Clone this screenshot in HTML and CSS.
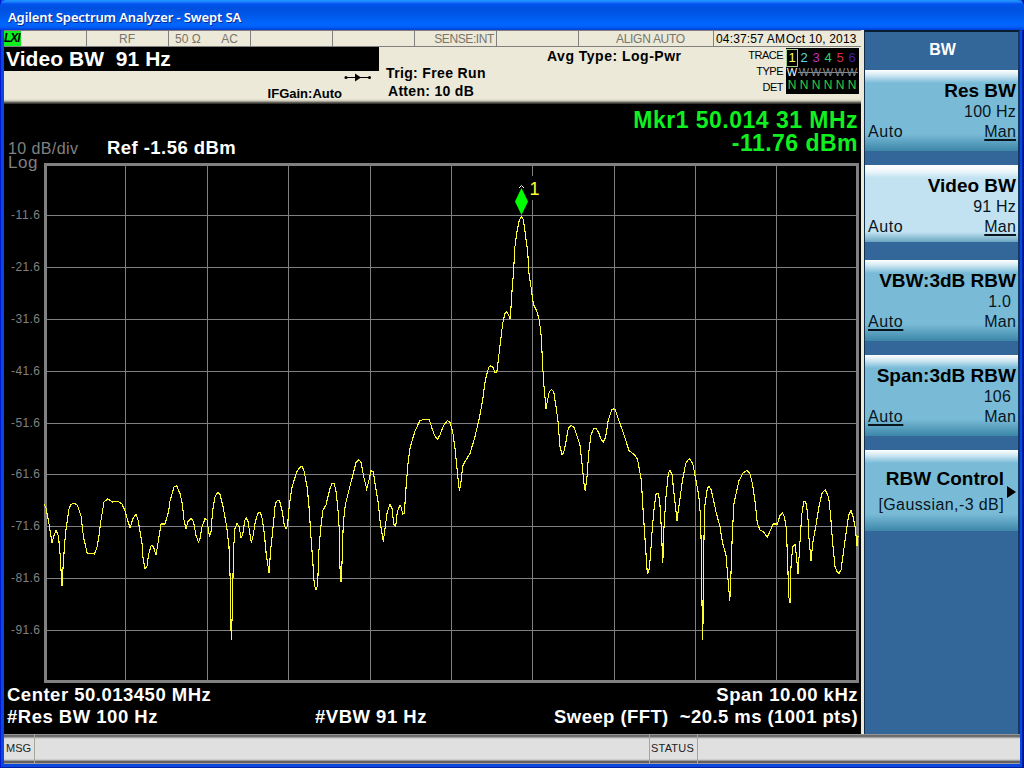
FILE: index.html
```
<!DOCTYPE html>
<html lang="en">
<head>
    <meta charset="UTF-8">
    <meta name="viewport" content="width=device-width, initial-scale=1.0">
    <title>Agilent Spectrum Analyzer - Swept SA</title>
    <link rel="stylesheet" href="styles.css">
</head>

<body>
    <div class="window">
        <div class="title-bar">Agilent Spectrum Analyzer - Swept SA</div>

        <div class="main">
            <div class="analyzer">
                <div class="info-strip">
                    <div class="cell"><span class="lxi">LXI</span></div>
                    <div class="cell center">RF</div>
                    <div class="cell spread"><span>50 Ω</span><span>AC</span></div>
                    <div class="cell"></div>
                    <div class="cell"></div>
                    <div class="cell right">SENSE:INT</div>
                    <div class="cell"></div>
                    <div class="cell align">ALIGN AUTO</div>
                    <div class="cell clock"><span>04:37:57 AM</span><span>Oct 10, 2013</span></div>
                </div>

                <div class="settings">
                    <div class="active-function">
                        <div class="entry">Video BW&nbsp; 91 Hz</div>
                        <div class="gain">
                            <span>IFGain:Auto</span>
                            <svg class="path-icon" width="28" height="9" viewBox="0 0 28 9">
                                <path d="M2 4.5H26" stroke="#000"/>
                                <circle cx="2" cy="4.5" r="1.5"/>
                                <circle cx="25.5" cy="4.5" r="1.5"/>
                                <path d="M11 0.5L17 4.5L11 8.5Z"/>
                            </svg>
                        </div>
                    </div>
                    <div class="trigger">
                        <p class="trig">Trig: Free Run</p>
                        <p class="atten">Atten: 10 dB</p>
                    </div>
                    <div class="average">Avg Type: Log-Pwr</div>
                    <div class="trace-labels">
                        <p>TRACE</p>
                        <p>TYPE</p>
                        <p>DET</p>
                    </div>
                    <div class="trace-box">
                        <span class="t1">1</span><span class="t2">2</span><span class="t3">3</span><span class="t4">4</span><span class="t5">5</span><span class="t6">6</span>
                        <span class="type on">W</span><span class="type">W</span><span class="type">W</span><span class="type">W</span><span class="type">W</span><span class="type">W</span>
                        <span class="det">N</span><span class="det">N</span><span class="det">N</span><span class="det">N</span><span class="det">N</span><span class="det">N</span>
                    </div>
                </div>

                <div class="display">
                    <div class="marker-readout">
                        <p class="freq">Mkr1 50.014 31 MHz</p>
                        <p class="ampl">-11.76 dBm</p>
                    </div>
                    <div class="ref-row">
                        <span class="scale">10 dB/div</span>
                        <span class="ref">Ref -1.56 dBm</span>
                    </div>

                    <svg class="plot" width="857" height="526" viewBox="4 158 857 526">
                        <text class="log" x="8" y="168">Log</text>
                        <g class="ticks">
                            <text x="11" y="219" textLength="29">-11.6</text>
                            <text x="11" y="271" textLength="29">-21.6</text>
                            <text x="11" y="323" textLength="29">-31.6</text>
                            <text x="11" y="375" textLength="29">-41.6</text>
                            <text x="11" y="427" textLength="29">-51.6</text>
                            <text x="11" y="478" textLength="29">-61.6</text>
                            <text x="11" y="530" textLength="29">-71.6</text>
                            <text x="11" y="582" textLength="29">-81.6</text>
                            <text x="11" y="634" textLength="29">-91.6</text>
                        </g>
                        <path class="grid" d="M125.5 164V682M207.5 164V682M288.5 164V682M370.5 164V682M451.5 164V682M532.5 164V176M532.5 200V682M614.5 164V682M695.5 164V682M776.5 164V682
                            M45 215.5H858M45 267.5H858M45 319.5H858M45 371.5H858M45 423.5H858M45 474.5H858M45 526.5H858M45 578.5H858M45 630.5H858"/>
                        <rect class="frame" x="45.5" y="164.5" width="812" height="517"/>
                        <polyline class="trace" points="44,504 46,508 49,524 52,543 53.5,537 56,530.5 58.5,536 60,553 62,586 63.5,560 65.5,533 69,509 71,504.5 74,503 77.5,505.5 81,516 83.5,537 87,552.5 88.5,553.7 94.5,554 97,547 99.5,533 100.5,523 104,502 107.7,498.8 112.5,502 118,501.5 122,504 125,511 130,528 133,518.5 136,514.3 138,520 142,543 143,558 145,569 147,566 148.5,555 151,546 152,545 153.5,547 156,555 158,543 161,524 165,524 168.7,511 170,501 174,487 176.7,486 180,493.5 182.5,505 184,520 186,528.5 188,521.5 191,518.3 193.5,521.5 196,535.5 198.5,542 200,538.5 202,527 205,518.5 207,520 209.5,537 211,531.5 212.7,510 215,497 217.7,492.3 220,494.5 222.7,505 226.7,526.7 229,546.7 230.3,582 231.2,639.5 232.3,613 233.5,550 235,528 237,523.7 239,526.7 241,537.3 242.7,535 244.7,520.7 246.3,518.3 248,521.7 251.3,542.5 253.3,535 255,523.3 257.7,513.3 260,512.3 261.7,516 264.3,533.3 266.3,555 269,572.5 270.7,550 273.3,525 275.3,503.3 277.3,500.5 279.7,501 282.3,511.7 284.3,526 286,528.3 287.5,526 289,508.3 291.7,488.3 296.7,471.7 300,467.2 302.3,466.5 304,470.7 307.3,488.3 309.3,510 310.7,533.3 312.7,560 314.3,585 316,589.5 317.7,585 318.7,553.3 320.7,528.3 323,510 326,505 330,488.3 332,483.5 334.3,483.5 336,491.7 338,510 339.3,530 340,568 341,581.5 342,563 343.3,523 345.3,505 349,490 353.3,473.3 356,462.7 358.7,459.5 361,462.3 363.7,476.7 366.7,489 368.7,481.7 371,470.7 373.3,471.7 375.3,485 378.3,503.3 380.3,523.3 383.3,541.5 385,528.3 387.3,511.7 390,504.7 392,508.3 393.7,524 395.7,526.3 397.3,511.7 400,505 401.3,507.5 402.7,514.3 404.3,513.3 406,488.3 408,463.3 410.3,446.7 415,431 420,420.5 424,419.5 429.3,420 432,428.3 434.7,435.7 437.3,439.5 440,435 443.3,426 447.3,420.7 450,422.3 452.7,431.7 455,448.3 457.3,471.7 459.3,490.5 460.7,485 462.7,466 465,461.7 470,453.3 474.7,437.7 479.3,418.3 482.7,400 485.3,380 488.7,367.3 490.7,365.7 493,367.3 495,373 496.7,372.7 498.3,360 500.7,340 502.7,323.3 505,313.3 506.7,311.7 508.7,315 510.3,319.3 511.7,295 513.7,270 514.7,248.3 516.7,233.3 519.3,220 521.7,216.3 523.3,219.3 525,231.7 527.7,251.7 529,273.3 531.7,291.7 533.3,304 536.7,310.7 539.3,320 541.3,336.7 542.7,366.7 544,386.7 546,408.5 547.3,401.7 549.3,391.7 551.7,389.5 553.7,391.7 556,406.7 558.3,423.3 559.7,445 562,454.5 563.7,452.7 566,441.7 568.3,428.3 571.3,425.5 574,427.3 577.3,436.7 580,445 582.3,466.7 584.3,486.7 585.3,490.5 587,476.7 588.7,453.3 591,435 593.3,429 595.7,428.3 598.3,431.7 600.7,438.3 603.3,442.3 605.7,436.7 608.3,420 611.7,410 613.5,409 615.3,410 618.7,420 623.3,432.7 629,450.5 635,455.3 637.5,459.3 641.3,480 643.3,513.3 645.3,543.3 647.3,573.3 648.7,572.3 650.3,558.3 652.3,528.3 654.3,506.7 656,494.3 658,493.3 659.7,500 661.3,528.3 662.8,562.5 664,526.7 666,496.7 668.3,473.3 670,470.5 672,474 674.3,496.7 677,520.5 679.3,503.3 682.3,481.7 685.7,463.3 689.3,458.5 692.7,463.3 695.3,476.7 698.7,495 700.3,513.3 701.3,546.7 702,603 702.8,639.5 703.8,546.7 704.7,506.7 707.3,488.3 709.3,486.5 711.3,490 716,511.7 720,526.7 722.3,541.7 726,555 728.3,583.3 729.8,600.5 731,573.3 732.3,533.3 734,503.3 739,480.7 743.3,472.7 746.7,470.5 749.7,472.7 752.7,485 755.3,503.3 757.3,523.3 760,530 763.3,531.7 767.3,537.3 770,531 773.3,524 777.3,524 780,515.7 782.3,512.5 784.3,516.7 786.3,528.3 787.7,561.7 788.7,596.7 790,602.7 791,566.7 792.7,546.7 795,544.5 796.3,555 798,573.7 799.7,546.7 801.7,515 803.7,501.7 805.7,501.7 807.7,513.3 809,538.3 811,560.5 812.7,543.3 816,525 819,506.7 822,493.3 825.3,489.7 828.7,497.3 830.7,516.7 832.7,543.3 835,566.7 837,571.3 839,573.5 841,570 843.3,553.3 846,533.3 848.7,515 851,510.5 853,516.7 855.3,528.3 857,545.7 858,536"/>
                        <!-- marker 1 -->
                        <path class="marker" d="M521.5 188L528 201.5L521.5 215L515 201.5Z"/>
                        <path class="marker-tip" d="M519 188L521.5 185.5L524 188"/>
                        <text class="marker-label" x="529.5" y="195">1</text>
                    </svg>

                    <div class="footer-row">
                        <span class="center-freq">Center 50.013450 MHz</span>
                        <span class="span-freq">Span 10.00 kHz</span>
                    </div>
                    <div class="footer-row">
                        <span class="rbw">#Res BW 100 Hz</span>
                        <span class="vbw">#VBW 91 Hz</span>
                        <span class="sweep">Sweep (FFT)&nbsp; ~20.5 ms (1001 pts)</span>
                    </div>
                </div>
            </div>

            <div class="softkeys">
                <div class="menu-title">BW</div>
                <div class="key">
                    <p class="name">Res BW</p>
                    <p class="value">100 Hz</p>
                    <p class="mode"><span>Auto</span><span class="selected">Man</span></p>
                </div>
                <div class="key active">
                    <p class="name">Video BW</p>
                    <p class="value">91 Hz</p>
                    <p class="mode"><span>Auto</span><span class="selected">Man</span></p>
                </div>
                <div class="key">
                    <p class="name">VBW:3dB RBW</p>
                    <p class="value inset">1.0</p>
                    <p class="mode"><span class="selected">Auto</span><span>Man</span></p>
                </div>
                <div class="key">
                    <p class="name">Span:3dB RBW</p>
                    <p class="value inset">106</p>
                    <p class="mode"><span class="selected">Auto</span><span>Man</span></p>
                </div>
                <div class="key submenu">
                    <div>
                        <p class="name">RBW Control</p>
                        <p class="value">[Gaussian,-3 dB]</p>
                    </div>
                    <svg width="9" height="12" viewBox="0 0 9 12"><path d="M0 0L9 6L0 12Z"/></svg>
                </div>
            </div>
        </div>

        <div class="status-bar">
            <div class="msg-label">MSG</div>
            <div class="msg"></div>
            <div class="status-label">STATUS</div>
            <div class="status"></div>
        </div>
    </div>
</body>
</html>
```
FILE: styles.css
```
:root {
    --panel: #ece9d8;
    --frame-blue: #0a47de;
    --grid: #808080;
    --green: #10f020;
    --yellow: #ffff30;
}

* {
    box-sizing: border-box;
    margin: 0;
    padding: 0;
}

body {
    width: 1024px;
    height: 768px;
    overflow: hidden;
    background: #000;
    font-family: "Liberation Sans", Arial, sans-serif;
}

p, span, div {
    white-space: nowrap;
}

.window {
    display: flex;
    flex-direction: column;
    width: 1024px;
    height: 768px;
    padding: 0 4px 4px;
    background: var(--frame-blue);
    box-shadow: inset 1px 0 #0019cf, inset -1px 0 #00138c, inset -2px -1px #001ea0;
}

.title-bar {
    flex: none;
    height: 30px;
    margin: 0 -4px;
    padding: 7px 0 0 8px;
    border-radius: 6px 6px 0 0;
    background: linear-gradient(#0997ff 0, #2a8fff 1px, #0053ee 4px, #0050e0 8px, #0058e8 15px, #0066ff 24px, #0060f8 27px, #003dd7 30px);
    color: #fff;
    font: 600 13px/20px "Noto Sans", sans-serif;
    letter-spacing: -0.12px;
    text-shadow: 1px 1px #0a2a90;
}

.main {
    display: flex;
    height: 704px;
}

.analyzer {
    width: 860px;
    border-right: 3px solid var(--panel);
    background: #000;
}

/* top strip */
.info-strip {
    display: grid;
    grid-template-columns: 83px repeat(6, 82px) 135px 1fr;
    height: 17px;
    border-top: 1px solid var(--grid);
    border-bottom: 1px solid var(--grid);
    background: var(--panel);
    color: #77756c;
    font-size: 12px;
    line-height: 16px;
}

.cell {
    border-right: 1px solid var(--grid);
}

.center {
    padding-right: 1px;
    text-align: center;
}

.right {
    padding-right: 2px;
    text-align: right;
    letter-spacing: -0.4px;
}

.spread {
    display: flex;
    justify-content: space-between;
    padding: 0 12px 0 6px;
}

.align {
    padding-left: 37px;
    letter-spacing: -0.3px;
}

.clock {
    display: flex;
    gap: 1px;
    border: 0;
    padding-left: 2px;
    color: #000;
    letter-spacing: 0.15px;
}

.lxi {
    display: block;
    width: 17px;
    height: 15px;
    background: #10f020;
    color: #000;
    font: italic bold 12px/15px "Liberation Sans", sans-serif;
    letter-spacing: -1px;
}

/* settings header */
.settings {
    display: flex;
    height: 57px;
    background: linear-gradient(var(--panel) 52px, #c8c5b6 54px, #77756c 55px, #22211e 57px);
    font-weight: bold;
}

.active-function {
    width: 375px;
}

.entry {
    height: 24px;
    padding-left: 2px;
    background: #000;
    color: #fff;
    font-size: 21px;
    line-height: 24px;
    letter-spacing: 0.05px;
}

.gain {
    display: flex;
    justify-content: flex-end;
    gap: 2px;
    padding-right: 7px;
    font-size: 13px;
}

.gain span {
    padding-top: 15px;
    line-height: 15px;
}

.path-icon {
    margin-top: 2px;
}

.trigger {
    width: 168px;
    padding: 17px 0 0 7px;
    font-size: 14px;
    line-height: 18px;
    letter-spacing: 0.35px;
}

.atten {
    padding-left: 2px;
    letter-spacing: 0.3px;
}

.average {
    width: 196px;
    font-size: 14px;
    line-height: 19px;
    letter-spacing: 0.5px;
}

.trace-labels {
    width: 41px;
    padding-right: 1px;
    font-size: 11px;
    font-weight: normal;
    line-height: 16px;
    text-align: right;
    letter-spacing: -0.5px;
}

.trace-box {
    display: grid;
    grid-template-columns: repeat(6, 12px);
    grid-template-rows: 18px 11px 15px;
    width: 73px;
    height: 46px;
    margin: 1px 0 0 2px;
    padding: 1px 0;
    background: #000;
    font-size: 13px;
    font-weight: normal;
    line-height: 18px;
    text-align: center;
}

.t1 { outline: 1px solid #9fd08c; outline-offset: -1px; color: #ffff60; }
.t2 { color: #5fd7df; }
.t3 { color: #c030c8; }
.t4 { color: #30d070; }
.t5 { color: #d03050; }
.t6 { color: #4020a8; }

.type {
    background: linear-gradient(#8a8a8a, #8a8a8a) 0 5px / 100% 1px no-repeat;
    color: #8a8a8a;
    font-size: 11px;
    line-height: 11px;
}

.type.on {
    background: none;
    color: #fff;
}

.det {
    color: #30d040;
    font-size: 12px;
    line-height: 14px;
}

/* measurement display */
.display {
    color: #fff;
    font-weight: bold;
}

.marker-readout {
    height: 33px;
    padding: 5px 3px 0 0;
    color: var(--green);
    font-size: 23px;
    line-height: 23px;
    letter-spacing: 0.48px;
    text-align: right;
}

.ref-row {
    display: flex;
    height: 21px;
    padding-left: 4px;
    font-size: 18.5px;
    line-height: 22px;
    letter-spacing: 0.45px;
}

.scale {
    width: 99px;
    padding-top: 1px;
    color: var(--grid);
    font-size: 16px;
    font-weight: normal;
    letter-spacing: 0.4px;
}

.plot {
    display: block;
    overflow: visible;
}

.log {
    fill: var(--grid);
    font-size: 17px;
    font-weight: normal;
    letter-spacing: 0.5px;
}

.ticks {
    fill: var(--grid);
    font-size: 12px;
    font-weight: normal;
}

.grid {
    stroke: var(--grid);
    stroke-width: 1;
}

.frame {
    fill: none;
    stroke: var(--grid);
    stroke-width: 3;
}

.trace {
    fill: none;
    stroke: var(--yellow);
    stroke-width: 1.1;
    shape-rendering: crispEdges;
}

.marker {
    fill: #00ff00;
}

.marker-tip {
    fill: none;
    stroke: #fff;
}

.marker-label {
    fill: var(--yellow);
    font-size: 18px;
    font-weight: normal;
}

.footer-row {
    display: grid;
    grid-template-columns: 1fr auto;
    height: 22px;
    padding: 0 3px;
    font-size: 18.5px;
    line-height: 22px;
    letter-spacing: 0.5px;
}

.footer-row:last-child {
    grid-template-columns: 308px 1fr auto;
}

.sweep {
    letter-spacing: 0.42px;
}

/* softkey menu */
.softkeys {
    flex: 1;
    border-left: 1px solid #102c48;
    border-right: 2px solid #163a5c;
    border-top: 2px solid #0a1c30;
    background: #336699;
}

.menu-title {
    height: 38px;
    padding-left: 2px;
    color: #fff;
    font-size: 16px;
    font-weight: bold;
    line-height: 35px;
    text-align: center;
}

.key {
    height: 81px;
    margin-bottom: 14px;
    padding: 10px 2px 0 3px;
    background: linear-gradient(#fff 0, #d4eaf4 5px, #79bbd7 13px, #79bbd7 64px, #3c86a8 81px);
    color: #08141c;
    font-size: 16px;
    line-height: 20px;
    text-align: right;
    letter-spacing: 0.2px;
}

.key.active {
    height: 77px;
    margin-bottom: 18px;
    background: linear-gradient(#fff 0, #f4fafd 5px, #c2e2f1 13px, #c2e2f1 67px, #6aa6c2 77px);
}

.name {
    color: #000;
    font-size: 19px;
    font-weight: bold;
    line-height: 22px;
    letter-spacing: 0;
}

.inset {
    padding-right: 5px;
}

.mode {
    display: flex;
    justify-content: space-between;
}

.mode span:first-child {
    letter-spacing: 0.6px;
}

.selected {
    text-decoration: underline;
    text-decoration-thickness: 2px;
    text-underline-offset: 2px;
}

.submenu {
    display: flex;
    align-items: center;
    justify-content: flex-end;
    gap: 3px;
    padding-top: 2px;
}

.submenu .value {
    padding-top: 5px;
    letter-spacing: 0.4px;
}

/* bottom status bar */
.status-bar {
    display: grid;
    grid-template-columns: 31px 615px 48px 1fr;
    height: 30px;
    background: linear-gradient(#aaa 0, #555 2px, #bbb 4px, #e0e0e0 5px, #e0e0e0 25px, #bbb 26px, #444 28px, #bbb 30px);
    color: #222;
    font-size: 11px;
    line-height: 29px;
}

.status-bar div {
    border-right: 1px solid #a8a59a;
    padding-left: 2px;
}

.status-bar .status-label {
    padding-left: 1px;
    letter-spacing: 0.2px;
}

.status-bar .status {
    border: 0;
}
```
